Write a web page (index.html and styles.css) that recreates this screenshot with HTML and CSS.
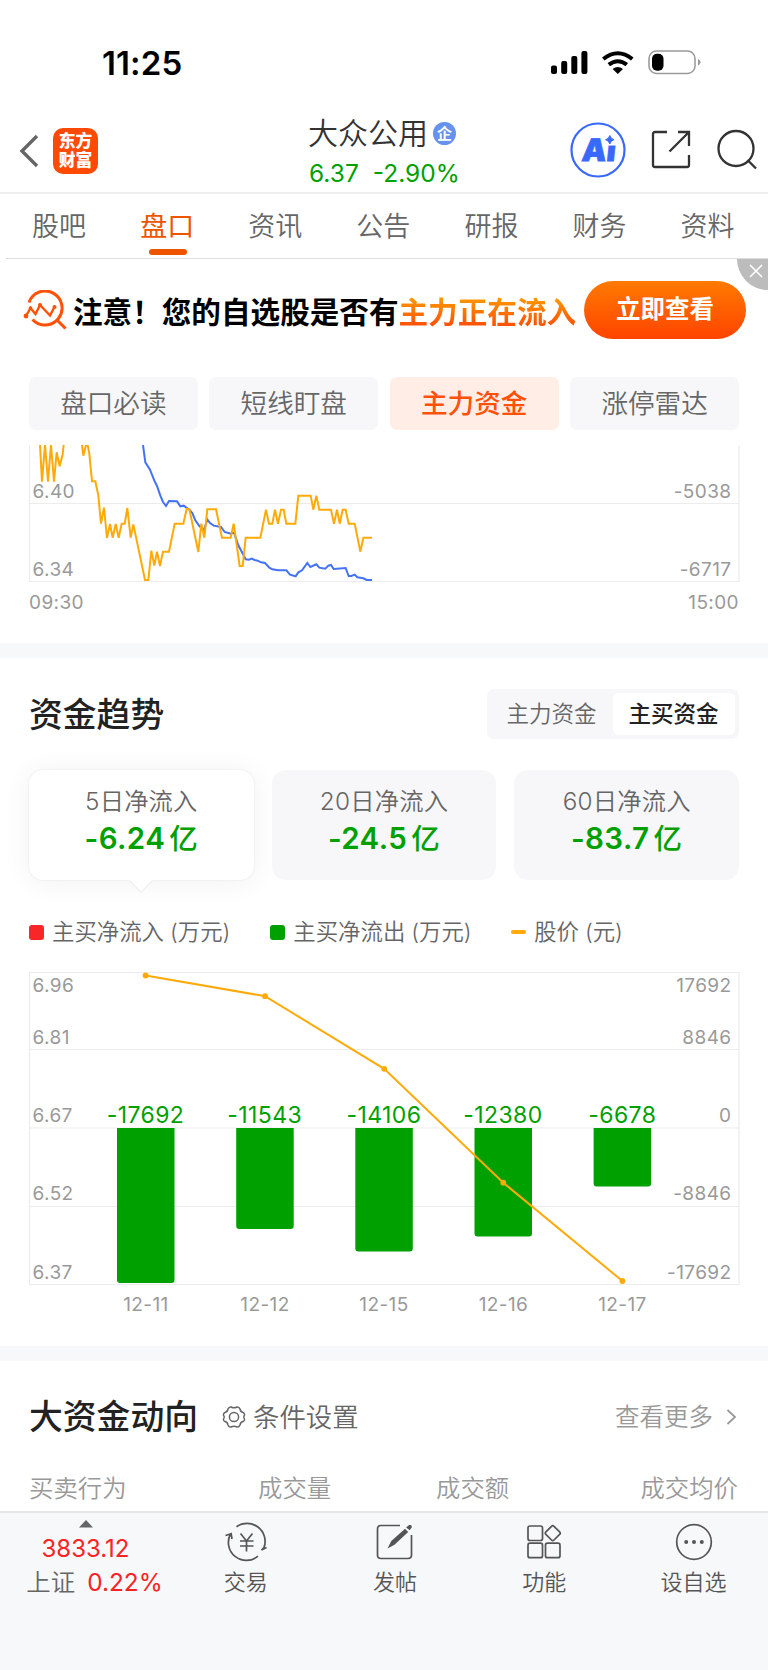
FILE: index.html
```html
<!DOCTYPE html>
<html lang="zh-CN">
<head>
<meta charset="utf-8">
<title>大众公用</title>
<link rel="stylesheet" href="styles.css">
</head>
<body>
<div class="status">
  <span class="time">11:25</span>
  <svg class="status-icons" width="152" height="26" viewBox="0 0 152 26">
    <rect x="1" y="15.500" width="6" height="8.500" rx="2"/>
    <rect x="11.200" y="11" width="6" height="13" rx="2"/>
    <rect x="21.300" y="6" width="6" height="18" rx="2"/>
    <rect x="31.400" y="1" width="6" height="23" rx="2"/>
    <g fill="none" stroke="#000" stroke-width="4">
      <path d="M53.300 9Q67.800 -2.600 82.300 9"/>
      <path d="M58.800 14.600Q67.800 7.800 76.800 14.600"/>
    </g>
    <path d="M67.800 24L62.600 19Q67.800 15.200 73 19Z"/>
    <rect x="99" y="1" width="46" height="22.500" rx="7.500" fill="none" stroke="#9b9b9b" stroke-width="1.600"/>
    <rect x="102" y="3.800" width="11.500" height="17" rx="5"/>
    <path d="M148 9Q150.500 10 150.500 12.300T148 15.600Z" fill="#9b9b9b"/>
  </svg>
</div>
<header class="header">
  <div class="head-left">
    <svg width="20" height="34" viewBox="0 0 20 34"><path d="M18 2L3 17L18 32" fill="none" stroke="#666" stroke-width="3.400"/></svg>
    <div class="logo"><span>东方</span><span>财富</span></div>
  </div>
  <div class="head-mid">
    <div class="stock">大众公用<i class="badge">企</i></div>
    <div class="quote"><span>6.37</span><span>-2.90%</span></div>
  </div>
  <div class="head-right">
    <svg width="56" height="56" viewBox="0 0 56 56">
      <circle cx="28" cy="28" r="26.500" fill="#fff" stroke="#3869fb" stroke-width="2.200"/>
      <text class="ai" transform="translate(11 38.500) skewX(-6)">Ai</text>
      <rect x="34" y="11" width="13" height="12.500" fill="#fff"/>
      <path d="M39.800 13.500Q40.700 16.900 44 17.700Q40.700 18.600 39.800 22Q38.900 18.600 35.600 17.700Q38.900 16.900 39.800 13.500Z" fill="#3869fb" stroke="#3869fb"/>
    </svg>
    <svg width="40" height="40" viewBox="0 0 40 40" fill="none" stroke="#333" stroke-width="2.300">
      <path d="M16 2H4Q2 2 2 4V35Q2 37 4 37H36Q38 37 38 35V25"/>
      <path d="M27 2H38V16M38 2L18.500 21.500"/>
    </svg>
    <svg width="42" height="42" viewBox="0 0 42 42" fill="none" stroke="#333" stroke-width="2.300"><circle cx="20" cy="19.500" r="17.500"/><path d="M31.500 31L40 39.500"/></svg>
  </div>
</header>
<nav class="tabs">
  <span>股吧</span><span class="on">盘口</span><span>资讯</span><span>公告</span><span>研报</span><span>财务</span><span>资料</span>
</nav>
<section class="banner">
  <svg class="scan" width="46" height="42" viewBox="0 0 46 42" fill="none" stroke="#ff5208">
    <path d="M6 12.500A17 17 0 1 1 9.500 29.500M35 31L42.500 38.500" stroke-width="3"/>
    <path d="M3 26L7.500 18L12.500 24L17 15L27 25.500L31.500 17" stroke-width="2.400"/>
    <g fill="#ff5208" stroke="none"><circle cx="3" cy="26" r="2.400"/><circle cx="7.500" cy="18" r="1.800"/><circle cx="17" cy="15" r="2"/><circle cx="31.500" cy="17" r="2"/></g>
  </svg>
  <p class="notice">注意！您的自选股是否有<b>主力正在流入</b></p>
  <span class="cta">立即查看</span>
  <svg class="close" width="31" height="31" viewBox="0 0 31 31"><path d="M0 0H31V31A31 31 0 0 1 0 0Z" fill="#bcbcbc"/><path d="M13 6L25 18M25 6L13 18" stroke="#fff" stroke-width="1.600"/></svg>
</section>
<div class="chips"><span>盘口必读</span><span>短线盯盘</span><span class="on">主力资金</span><span>涨停雷达</span></div>
<svg class="chart" width="768" height="198" viewBox="0 0 768 198">
  <g class="grid"><path d="M29.500 0V136.500H739V0M29.500 58.500H739"/></g>
  <g class="axis">
    <text x="32.500" y="52.500">6.40</text><text x="32.500" y="130.500">6.34</text><text x="29" y="163.500">09:30</text>
    <g text-anchor="end"><text x="731.500" y="52.500">-5038</text><text x="731.500" y="130.500">-6717</text><text x="739" y="163.500">15:00</text></g>
  </g>
  <g transform="translate(0 -10) scale(.33333)" fill="none" stroke-width="6">
    <path stroke="#4472f5" d="M429 30L436 82L450 104L463 137L471 153L481 182L489 201L498 213L507 198L531 199L541 214L551 212L568 224L577 234L586 256L598 273L612 285L622 253L630 264L641 272L663 276L674 291L692 296L702 293L715 331L737 373L747 374L755 371L764 375L773 377L783 382L795 384L808 398L817 403L834 406L859 406L870 419L887 424L895 412L906 406L922 384L931 396L949 388L958 398L976 401L985 392L993 390L1001 402L1037 399L1046 423L1054 423L1064 419L1072 427L1090 430L1100 435H1116"/>
    <path stroke="#ffaa08" d="M120 30L126 140L135 30L144 140L153 30L162 140L170 52L179 94L188 58L191 30M246 30L250 62L258 30H263L268 56L276 139H286L295 182L303 266L312 218L321 309L330 267L338 308L347 267L356 308L365 266H374L382 219L392 308L400 268L435 435H445L454 347L463 392L471 350L480 393L489 350H507L524 266H550L560 222H568L595 351L604 266L613 308L622 223H648L666 308H692L701 266L719 393H728L737 308H781L798 224L807 266H817L825 224L834 266L843 224H851L859 266H886L895 182H932L940 224L949 182L958 224H993L1002 266L1011 224L1019 266L1028 224H1037L1046 266H1064L1081 350L1090 308H1116"/>
  </g>
</svg>
<div class="band"></div>
<section class="trend">
  <div class="trend-head">
    <h2>资金趋势</h2>
    <div class="seg"><span>主力资金</span><span class="on">主买资金</span></div>
  </div>
  <div class="cards">
    <div class="card on"><span>5日净流入</span><b>-6.24<i>亿</i></b></div>
    <div class="card"><span>20日净流入</span><b>-24.5<i>亿</i></b></div>
    <div class="card"><span>60日净流入</span><b>-83.7<i>亿</i></b></div>
  </div>
  <div class="legend">
    <span class="key in">主买净流入<em>(万元)</em></span>
    <span class="key out">主买净流出<em>(万元)</em></span>
    <span class="key price">股价<em>(元)</em></span>
  </div>
</section>
<svg class="chart" width="768" height="388" viewBox="0 0 768 388">
  <g class="grid"><path d="M29.500 14.500H739V326.500H29.500ZM29.500 91.500H739M29.500 170H739M29.500 248.500H739"/></g>
  <g fill="#00a000">
    <path d="M117 170H174.500V322Q174.500 325 171.500 325H120Q117 325 117 322Z"/>
    <path d="M236.200 170H293.700V268Q293.700 271 290.700 271H239.200Q236.200 271 236.200 268Z"/>
    <path d="M355.300 170H412.800V290.500Q412.800 293.500 409.800 293.500H358.300Q355.300 293.500 355.300 290.500Z"/>
    <path d="M474.500 170H532V275.500Q532 278.500 529 278.500H477.500Q474.500 278.500 474.500 275.500Z"/>
    <path d="M593.600 170H651.100V225.500Q651.100 228.500 648.100 228.500H596.600Q593.600 228.500 593.600 225.500Z"/>
  </g>
  <g class="axis">
    <text x="32.500" y="34">6.96</text><text x="32.500" y="85.500">6.81</text><text x="32.500" y="164">6.67</text><text x="32.500" y="242">6.52</text><text x="32.500" y="320.500">6.37</text>
    <g text-anchor="end"><text x="731.500" y="34">17692</text><text x="731.500" y="85.500">8846</text><text x="731.500" y="164">0</text><text x="731.500" y="242">-8846</text><text x="731.500" y="320.500">-17692</text></g>
    <g text-anchor="middle"><text x="146" y="353">12-11</text><text x="265" y="353">12-12</text><text x="384" y="353">12-15</text><text x="503.500" y="353">12-16</text><text x="622.500" y="353">12-17</text></g>
  </g>
  <g class="val" text-anchor="middle"><text x="145.500" y="165">-17692</text><text x="264.700" y="165">-11543</text><text x="384" y="165">-14106</text><text x="503" y="165">-12380</text><text x="622.300" y="165">-6678</text></g>
  <path d="M145.600 17.500L265 38.200L384.200 110.800L503.300 224.700L622.400 323" fill="none" stroke="#ffaa08" stroke-width="2"/>
  <g fill="#ffaa08"><circle cx="145.600" cy="17.500" r="2.900"/><circle cx="265" cy="38.200" r="2.900"/><circle cx="384.200" cy="110.800" r="2.900"/><circle cx="503.300" cy="224.700" r="2.900"/><circle cx="622.400" cy="323" r="2.900"/></g>
</svg>
<div class="band"></div>
<section class="moves">
  <div class="moves-head">
    <h2>大资金动向</h2>
    <svg width="24" height="24" viewBox="0 0 24 24" fill="none" stroke="#666" stroke-width="1.500"><circle cx="12" cy="12" r="4.600"/><path d="M9 2Q12 3.500 15 2Q17 1.600 18 4Q18.500 6.800 21 7.400Q23.500 9 22 11.200Q21.500 12 22 12.800Q23.500 15 21 16.600Q18.500 17.200 18 20Q17 22.400 15 22Q12 20.500 9 22Q7 22.400 6 20Q5.500 17.200 3 16.600Q.5 15 2 12.800Q2.500 12 2 11.200Q.5 9 3 7.400Q5.500 6.800 6 4Q7 1.600 9 2Z"/></svg>
    <span class="cond">条件设置</span>
    <span class="more">查看更多</span>
    <svg width="12" height="18" viewBox="0 0 12 18"><path d="M1.500 2L9 9L1.500 16" fill="none" stroke="#999" stroke-width="1.800"/></svg>
  </div>
  <div class="cols"><span>买卖行为</span><span>成交量</span><span>成交额</span><span>成交均价</span></div>
</section>
<footer class="bottom">
  <div class="index">
    <svg width="14" height="8" viewBox="0 0 14 8"><path d="M0 7.500L7 0L14 7.500Z" fill="#666"/></svg>
    <span class="red pts">3833.12</span>
    <span class="pct">上证<span class="red">0.22%</span></span>
  </div>
  <div class="act">
    <svg width="44" height="40" viewBox="0 0 44 40" fill="none" stroke="#555" stroke-width="1.700"><path d="M12.500 4.800A18 18 0 0 1 40 25.500L37.500 28L42.500 25.500M34 34.200A18 18 0 0 1 6.500 12L1.500 13.500M7 11L8 17"/><path d="M16.500 11.500L22.500 19L28.500 11.500M22.500 19V29.500M16 19H29.500M16 24H29.500"/></svg>
    <span>交易</span>
  </div>
  <div class="act">
    <svg width="44" height="40" viewBox="0 0 44 40" fill="none" stroke="#555" stroke-width="1.700"><path d="M27 3.500H8Q4.500 3.500 4.500 7V33Q4.500 36.500 8 36.500H35Q38.500 36.500 38.500 33V13"/><path d="M16.500 24.500L19 19.500L32 8L34 10L21 22ZM34.500 5.500L36.500 3.800Q38 3.500 38 5L36.500 7Z" fill="#555"/></svg>
    <span>发帖</span>
  </div>
  <div class="act">
    <svg width="44" height="40" viewBox="0 0 44 40" fill="none" stroke="#555" stroke-width="1.700"><rect x="6" y="4" width="14.500" height="14.500" rx="2"/><rect x="6" y="21.200" width="14.500" height="14.500" rx="2"/><rect x="23.500" y="21.200" width="14.500" height="14.500" rx="2"/><rect x="25" y="5.400" width="11.500" height="11.500" rx="1.800" transform="rotate(45 30.750 11.150)"/></svg>
    <span>功能</span>
  </div>
  <div class="act">
    <svg width="44" height="40" viewBox="0 0 44 40"><circle cx="22" cy="20" r="17.300" fill="none" stroke="#555" stroke-width="1.700"/><g fill="#555"><circle cx="14.200" cy="20" r="2"/><circle cx="22" cy="20" r="2"/><circle cx="29.800" cy="20" r="2"/></g></svg>
    <span>设自选</span>
  </div>
</footer>
</body>
</html>
```
FILE: styles.css
```css
* { box-sizing: border-box; }
body { margin: 0; width: 768px; height: 1670px; overflow: hidden; background: #fff; color: #666; font-family: Inter, "Noto Sans CJK SC", sans-serif; font-weight: 350; }
svg { display: block; flex: none; }
h2 { margin: 0; font-size: 33.800px; font-weight: 500; line-height: 40px; color: #222; }
i, em { font-style: normal; }

.status { height: 108px; padding: 50px 66px 0 102px; display: flex; justify-content: space-between; align-items: flex-start; color: #000; }
.time { font-size: 33px; font-weight: 600; line-height: 26px; letter-spacing: .1px; }

.header { height: 86px; border-bottom: 2px solid #eee; display: grid; grid-template-columns: 308px 1fr 198px; }
.head-left { display: flex; align-items: center; gap: 14px; padding: 1px 0 0 19px; }
.logo { width: 45px; height: 46px; border-radius: 10px; background: #ff4a04; color: #fff; font-size: 16.800px; font-weight: 800; line-height: 19px; display: flex; flex-direction: column; align-items: center; justify-content: center; }
.head-mid { padding-top: 8px; white-space: nowrap; }
.stock { display: flex; align-items: center; gap: 5px; font-size: 30px; line-height: 34px; color: #333; }
.badge { width: 23px; height: 23px; border-radius: 50%; background: #6691ee; color: #fff; font-size: 15px; font-weight: 600; line-height: 23px; text-align: center; }
.quote { display: flex; gap: 14px; margin-top: 8px; padding-left: 1px; font-size: 24.500px; font-weight: 400; line-height: 30px; color: #00a000; }
.head-right { display: flex; align-items: center; gap: 25px; }
.ai { font-size: 31px; font-weight: 900; fill: #3869fb; stroke: #3869fb; stroke-width: .8px; }

.tabs { height: 65px; margin-left: 6px; border-bottom: 1px solid #ddd; display: flex; }
.tabs span { position: relative; left: -1px; width: 108.100px; padding-top: 17px; font-size: 27px; line-height: 32px; text-align: center; }
.tabs .on { color: #ee5500; font-weight: 400; }
.tabs .on::after { content: ""; position: absolute; left: 36px; top: 55px; width: 38px; height: 6px; border-radius: 3px; background: #ee5500; }

.banner { position: relative; height: 118px; padding: 22px 0 0 23px; display: flex; align-items: flex-start; }
.scan { margin-top: 9px; }
.notice { margin: 14px 0 0 4px; width: 511px; font-size: 29.600px; line-height: 34px; font-weight: 700; color: #000; white-space: nowrap; }
.notice b { font-weight: 700; background: linear-gradient(#ff9800 10%, #ff4a04 95%); -webkit-background-clip: text; background-clip: text; color: transparent; }
.cta { width: 162px; height: 58px; border-radius: 29px; background: linear-gradient(#ff7a00, #ff4400); color: #fff; font-size: 24.500px; font-weight: 700; line-height: 56px; text-align: center; }
.close { position: absolute; right: 0; top: 0; }

.chips { display: grid; grid-template-columns: repeat(4, 1fr); gap: 11.700px; height: 68px; padding: 0 29px 15px; }
.chips span { border-radius: 7px; background: #f7f7fa; font-size: 26.600px; line-height: 53px; text-align: center; }
.chips .on { background: #ffede6; color: #ff5208; font-weight: 500; }

.grid { fill: none; stroke: #ececec; stroke-width: 1.200; }
.axis { font-size: 19px; font-weight: 400; fill: #999; letter-spacing: .4px; }
.val { font-size: 23px; font-weight: 400; fill: #00a000; letter-spacing: .4px; }
.band { height: 15px; background: #f7f8fa; }

.trend { height: 300px; padding: 31px 29px 0; }
.trend-head { display: flex; justify-content: space-between; height: 81px; }
.trend-head h2 { padding-top: 6px; }
.seg { display: flex; width: 252px; height: 50px; padding: 4px; border-radius: 7px; background: #f7f7fa; font-size: 22.500px; line-height: 42px; text-align: center; }
.seg span { flex: 1; padding-right: 1px; }
.seg .on { border-radius: 6px; background: #fff; color: #222; font-weight: 500; }
.cards { display: grid; grid-template-columns: repeat(3, 1fr); gap: 18px; height: 110px; }
.card { position: relative; border-radius: 14px; background: #f7f7fa; display: flex; flex-direction: column; align-items: center; padding-top: 15px; }
.card span { font-size: 24.300px; line-height: 32px; letter-spacing: .2px; }
.card b { margin-top: 4px; font-size: 29.500px; font-weight: 600; line-height: 35px; color: #00a000; letter-spacing: .4px; }
.card b i { margin-left: 4px; font-size: 28.500px; font-weight: 500; }
.card.on { background: #fff; box-shadow: 0 2px 30px rgba(0,0,0,.06), 0 0 2px rgba(0,0,0,.1); }
.card.on::after { content: ""; position: absolute; left: 104px; bottom: -8px; width: 16px; height: 16px; background: linear-gradient(135deg, transparent 50%, #fff 50%); transform: rotate(45deg); box-shadow: 1px 1px 1px rgba(0,0,0,.06); }
.legend { display: flex; margin-top: 37px; font-size: 22.400px; line-height: 30px; }
.key { display: flex; align-items: center; }
.key::before { content: ""; width: 15px; height: 15px; margin-right: 8px; border-radius: 3px; background: #f82626; }
.key em { margin-left: 6px; }
.key.out { margin-left: 40px; }
.key.out::before { background: #00a000; }
.key.price { margin-left: 39.500px; }
.key.price::before { height: 4px; border-radius: 2px; background: #ffaa08; }

.moves { height: 150px; padding: 36px 29px 0; }
.moves-head { display: flex; align-items: center; height: 40px; }
.moves-head h2 { width: 193px; }
.cond { margin-left: 7px; font-size: 26.400px; line-height: 32px; }
.more { margin: 0 13px 0 auto; font-size: 24.500px; line-height: 32px; color: #999; }
.moves-head svg:last-child { margin-right: 1px; }
.cols { display: grid; grid-template-columns: 229px 178px 1fr auto; margin-top: 35px; padding-right: 1px; font-size: 24.400px; line-height: 32px; color: #999; }

.bottom { height: 159px; border-top: 2px solid #e6e6e6; background: #f7f8fa; display: grid; grid-template-columns: 171px repeat(4, 149.300px); }
.index { display: flex; flex-direction: column; align-items: center; padding-top: 7px; }
.red { color: #fa2222; font-weight: 400; }
.pts { margin-top: 7px; font-size: 24px; line-height: 28px; }
.pct { display: flex; gap: 12px; margin: 5px 0 0 18px; font-size: 24.400px; line-height: 28px; white-space: nowrap; }
.act { display: flex; flex-direction: column; align-items: center; padding-top: 9px; font-size: 22px; line-height: 30px; color: #555; }
.act span { margin-top: 5px; }
```
